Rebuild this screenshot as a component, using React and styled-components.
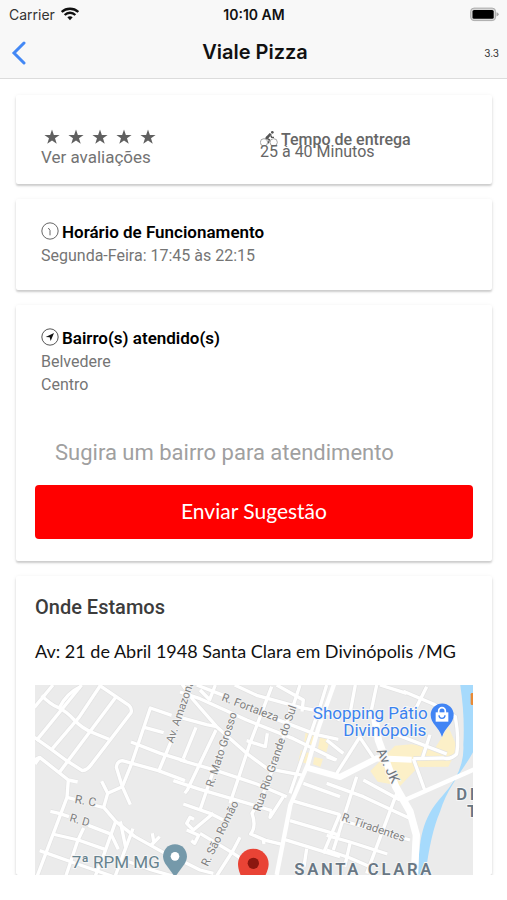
import React from "react";
import styled, { createGlobalStyle } from "styled-components";

const Global = createGlobalStyle`
  *, *::before, *::after { box-sizing: border-box; }
  body { margin: 0; background: #fff; font-family: Roboto, "Liberation Sans", sans-serif; }
  h1, h2, p, ul { margin: 0; padding: 0; }
`;

const Header = styled.header`
  background: #f8f8f8;
  border-bottom: 1px solid #dcdcdc;
  font-family: Inter, "Liberation Sans", sans-serif;
  color: #111;
`;

const Bar = styled.div`
  display: grid;
  grid-template-columns: 1fr auto 1fr;
  align-items: center;
  height: ${(p) => p.$height}px;
  padding: 0 8px 0 ${(p) => p.$left}px;
`;

const Carrier = styled.span`
  display: flex;
  align-items: center;
  gap: 6px;
  font-size: 14px;
  color: #333;
`;

const Time = styled.span`
  font-size: 14px;
  font-weight: 600;
`;

const End = styled.span`
  justify-self: end;
  display: flex;
  font-size: 10px;
  color: #333;
`;

const BackButton = styled.button`
  justify-self: start;
  display: flex;
  padding: 0;
  border: 0;
  background: none;
  cursor: pointer;
`;

const Title = styled.h1`
  font-size: 20px;
  line-height: 24px;
  font-weight: 600;
  padding-bottom: 2px;
`;

const Content = styled.main`
  display: flex;
  flex-direction: column;
  gap: 15px;
  padding: 16px 15px 0 16px;
  overflow: hidden;
`;

const Card = styled.section`
  padding: ${(p) => p.$pad};
  background: #fff;
  border-radius: 2px;
  box-shadow: 0 2px 2px rgba(0, 0, 0, 0.16), 0 1px 4px rgba(0, 0, 0, 0.08);
`;

const Columns = styled.div`
  display: grid;
  grid-template-columns: 1fr 1fr;
`;

const Cell = styled.div`
  padding-left: 6px;
  color: #666;
`;

const Delivery = styled(Cell)`
  padding-top: 7px;
  font-size: 16px;
  line-height: 12px;
`;

const DeliveryTitle = styled.h2`
  display: flex;
  align-items: center;
  gap: 3px;
  height: 12px;
  font-size: 16px;
  line-height: 12px;
  font-weight: 500;
`;

const Stars = styled.div`
  display: flex;
  align-items: center;
  gap: 8px;
  height: 20px;
  padding-left: 3px;
`;

const ReviewsLink = styled.a`
  display: block;
  font-size: 17px;
  line-height: 20px;
  color: #737373;
  text-decoration: none;
`;

const InfoTitle = styled.h2`
  display: flex;
  align-items: center;
  gap: 3px;
  font-size: 17px;
  line-height: 23px;
  font-weight: 600;
  color: #000;

  svg { margin-bottom: 4px; }
`;

const InfoList = styled.ul`
  list-style: none;
  font-size: 16px;
  line-height: 23px;
  color: #757575;
`;

const Form = styled.form`
  display: flex;
  flex-direction: column;
  gap: 5px;
  margin-top: 28px;
`;

const SuggestionInput = styled.input`
  width: 100%;
  height: 56px;
  padding: 0 20px;
  border: 0;
  outline: 0;
  background: transparent;
  font: 22px Roboto, "Liberation Sans", sans-serif;
  color: #333;

  &::placeholder { color: #a0a0a0; opacity: 1; }
`;

const SubmitButton = styled.button`
  height: 54px;
  padding: 0 0 3px;
  border: 0;
  border-radius: 4px;
  background: #ff0000;
  color: #fff;
  font: 400 21px Lato, "Liberation Sans", sans-serif;
  cursor: pointer;
`;

const PlaceTitle = styled.h2`
  font-size: 20px;
  line-height: 24px;
  font-weight: 500;
  color: #3c3c3c;
`;

const Address = styled.p`
  margin: 20px 0 22px;
  font: 400 18px/24px Lato, "Liberation Sans", sans-serif;
  color: #111;
`;

const MapDrawing = styled.svg`
  display: block;
  width: 100%;
  height: 190px;
  font-family: Roboto, "Liberation Sans", sans-serif;
`;

const WifiIcon = () => (
  <svg width="18" height="14" viewBox="0 0 54 42" fill="none" stroke="#111" strokeWidth="7">
    <path d="M2 15C16 2 38 2 52 15" />
    <path d="M11 24C20 15 34 15 43 24" />
    <path d="M19 31C24 27 30 27 35 31L27 40Z" fill="#111" stroke="none" />
  </svg>
);

const BatteryIcon = () => (
  <svg width="29" height="15" viewBox="0 0 93 45">
    <rect x="2" y="2" width="80" height="40" rx="11" fill="#d6d6d6" stroke="#a8a8a8" strokeWidth="3" />
    <rect x="8" y="8" width="68" height="28" rx="5" fill="#000" />
    <path d="M85 15q7 2 7 7t-7 7z" fill="#a8a8a8" />
  </svg>
);

const BackIcon = () => (
  <svg width="15" height="24" viewBox="0 0 15 24" fill="none" stroke="#4388f5" strokeWidth="3">
    <path d="M13 2L3 12L13 22" strokeLinecap="round" strokeLinejoin="miter" />
  </svg>
);

const StarIcon = () => (
  <svg width="16" height="16" viewBox="0 0 24 24" fill="#606060">
    <path d="M12 .8l2.800 8.100h8.600l-6.900 5.100 2.600 8.300-7.100-5.100-7.100 5.100 2.600-8.300L.6 8.900h8.600z" />
  </svg>
);

const BikeIcon = () => (
  <svg width="18" height="18" viewBox="0 0 54 54" fill="none" stroke="#777" strokeWidth="2">
    <circle cx="12" cy="34" r="11" />
    <circle cx="41" cy="34" r="11" />
    <path d="M24 16L18 21L28 26L25 37M32 13L35 19H42" stroke="#555" strokeWidth="4" />
    <path d="M17 19L29 6L35 10L24 23Z" fill="#555" stroke="none" />
    <circle cx="37" cy="4" r="4" fill="#555" stroke="none" />
  </svg>
);

const ClockIcon = () => (
  <svg width="18" height="18" viewBox="0 0 54 54" fill="none" stroke="#666" strokeWidth="3">
    <circle cx="27" cy="27" r="24.500" />
    <path d="M22 18L27 25V40" strokeWidth="3" />
  </svg>
);

const NavigateIcon = () => (
  <svg width="18" height="18" viewBox="0 0 54 54">
    <circle cx="27" cy="27" r="24.500" fill="none" stroke="#555" strokeWidth="3" />
    <path d="M39 15L29 39L26 28L14 27Z" fill="#111" />
  </svg>
);

const roadsWest = [
  "M28 82L84 15",
  "M34 182L170 15",
  "M82 206L162 112L225 18",
  "M104 276L275 48",
  "M50 46Q72 70 98 82T148 120T204 158L252 178",
  "M28 172L76 206L122 240L172 272Q188 270 200 252L318 98Q322 86 312 76L222 15",
  "M104 82Q124 40 166 20",
  "M28 240L44 232L130 300L158 306",
  "M44 232L30 252",
  "M130 300L126 352L36 590",
  "M126 352L150 358M205 375L234 382",
  "M76 394L102 400L132 410M190 436L262 464",
  "M82 462L160 480L240 508",
  "M44 512L140 546L260 588",
  "M176 444L158 482L122 590",
  "M230 304L248 340L236 382L272 424L330 470L420 520",
  "M248 340L292 320L316 374",
  "M292 320L274 262Q276 244 292 242L400 272L480 302",
  "M292 320L320 250L376 84L440 106",
  "M358 142L416 158",
  "M318 186L406 220L484 244",
  "M400 276L440 180",
  "M272 424L238 520L210 590",
  "M258 462L280 508",
  "M286 424L302 502",
  "M324 446L296 520L270 590",
  "M376 498L404 470M386 484L382 460",
  "M296 540L380 570L450 590",
];

const roadsCentre = [
  "M-10 -10L40 60L110 140L205 224L262 266L370 286",
  "M0 36L60 56L200 120L340 176L470 240",
  "M50 15L130 46M230 96L300 122L410 164L475 178",
  "M164 15L230 46L360 82L400 90",
  "M0 112L80 134L110 140",
  "M0 240L110 272L230 312L320 350",
  "M-20 302L60 328L250 384L275 392",
  "M275 392L270 412L310 350",
  "M60 30L90 60M106 15L88 62",
  "M48 142L10 236",
  "M108 150L22 330L14 340",
  "M160 112L108 250L60 390",
  "M275 20L210 190L150 370",
  "M334 74L300 210L250 340L216 400Q230 440 212 462L260 482L310 494",
  "M10 372L90 400L130 420",
  "M42 418L30 412L20 430L40 450L100 400",
  "M20 450L56 466L44 490L34 482",
  "M60 460L160 520L190 540",
  "M180 472L160 510L110 588",
  "M0 540L60 570L100 580",
  "M290 15L370 60L366 95",
  "M262 160L256 200L200 182",
  "M360 15L340 76",
  "M250 480L252 492",
  "M336 362L480 404",
  "M330 422L480 466",
  "M312 478L480 530",
  "M370 310L480 350",
  "M380 506L372 560",
  "M440 15L420 80L330 340",
  "M480 402L430 520",
];

const roadsEast = [
  "M76 15L60 100",
  "M90 170L20 280",
  "M30 120L-20 92",
  "M220 34L310 72L376 110Q388 180 380 222Q362 240 340 234L250 236",
  "M290 20L260 80L230 110",
  "M200 164L350 222",
  "M300 164L278 232",
  "M140 15L120 110",
  "M88 170L130 232",
  "M-10 310L100 350L250 420",
  "M-10 180L40 220",
  "M80 290L10 510",
  "M100 300L210 360",
  "M200 340L110 580",
  "M30 420L240 480",
  "M250 236L284 330",
  "M-10 466L60 486L172 522",
  "M-10 510L60 534L120 560",
  "M60 490L44 560",
  "M150 15L230 40",
  "M-10 230L16 240",
];

const Roads = ({ paths, shift }) => (
  <g transform={`translate(${shift} -15)`}>
    {paths.map((d) => <path key={d} d={d} />)}
  </g>
);

const CityMap = () => (
  <MapDrawing viewBox="0 0 1314 570" preserveAspectRatio="xMinYMin slice" role="img" aria-label="Mapa da região de Santa Clara">
    <rect width="1400" height="600" fill="#ebebeb" />
    <g fill="#fcf0c8">
      <path d="M812 140l26 8-8 40-24-6zM856 152l30 8-12 42-26-8zM798 196l24 8-6 32-26-8zM838 216l26 6-8 24-22-8z" />
      <path d="M1006 258L1080 182L1130 178L1200 190L1240 125L1268 190L1240 245L1150 246L1096 302L1028 290Z" />
    </g>
    <path d="M1275 -5H1320V190C1290 250 1240 300 1215 380Q1185 450 1170 580H1150C1150 470 1160 400 1220 335Q1290 260 1285 180Q1290 90 1275 -5Z" fill="#a6dafc" />
    <g fill="none" stroke="#e2e2e2" strokeWidth="14" strokeLinejoin="round">
      <Roads paths={roadsWest} shift={-30} />
      <Roads paths={roadsCentre} shift={435} />
      <Roads paths={roadsEast} shift={885} />
    </g>
    <g fill="none" stroke="#fff" strokeWidth="10" strokeLinejoin="round">
      <Roads paths={roadsWest} shift={-30} />
      <Roads paths={roadsCentre} shift={435} />
      <Roads paths={roadsEast} shift={885} />
    </g>
    <g fill="none" stroke="#fff" strokeWidth="13" strokeLinejoin="round">
      <path d="M900 -10L850 130L818 240L766 360L725 570" />
      <path d="M815 248L915 276L1025 220L1130 224" strokeWidth="18" />
      <path d="M1110 345L1320 252" />
      <path d="M1018 90L1030 165L1082 305L1125 380L1144 450L1138 570" strokeWidth="22" />
    </g>
    <g fill="#808080" stroke="#f4f4f4" strokeWidth="5" paintOrder="stroke" fontSize="34">
      <text transform="translate(118 354) rotate(10)" fontSize="36">R. C</text>
      <text transform="translate(102 408) rotate(16)">R. D</text>
      <text transform="translate(414 176) rotate(-71)">Av. Amazonas</text>
      <text transform="translate(558 46) rotate(21)">R. Fortaleza</text>
      <text transform="translate(534 308) rotate(-72)">R. Mato Grosso</text>
      <text transform="translate(676 382) rotate(-71)">Rua Rio Grande do Sul</text>
      <text transform="translate(518 546) rotate(-64)">R. São Romão</text>
      <text transform="translate(918 406) rotate(19)">R. Tiradentes</text>
      <text transform="translate(1024 198) rotate(65)" fontSize="40" fill="#6c747b">Av. JK</text>
    </g>
    <g stroke="#f6f6f6" strokeWidth="6" paintOrder="stroke">
      <text x="110" y="548" fontSize="51" fill="#66828e">7ª RPM MG</text>
      <g fill="#3b82ef" fontSize="51" textAnchor="end">
        <text x="1178" y="102">Shopping Pátio</text>
        <text x="1174" y="152">Divinópolis</text>
      </g>
      <g fill="#687784" fontSize="50" fontWeight="600" letterSpacing="8">
        <text x="778" y="571">SANTA CLARA</text>
        <text x="1264" y="346">DI</text>
        <text x="1296" y="396">T</text>
      </g>
    </g>
    <path d="M420 576L391 536C374 510 391 478 420 478S466 510 449 536Z" fill="#7599aa" />
    <circle cx="420" cy="514" r="13" fill="#fff" />
    <path d="M620 578C611 558 609 545 609 537A46 46 0 1 1 701 537C701 545 698 558 688 578Z" fill="#e94335" />
    <circle cx="655" cy="535" r="17" fill="#8c1710" />
    <path d="M1221 156C1212 126 1187 116 1187 90A34 34 0 1 1 1256 90C1256 116 1230 126 1221 156Z" fill="#4285f4" />
    <path d="M1202 82H1240V110H1202Z" fill="#fff" />
    <path d="M1211 84V78A10 10 0 0 1 1231 78V84" fill="none" stroke="#fff" strokeWidth="5" />
    <path d="M1212 91A9 9 0 0 0 1230 91" fill="none" stroke="#4285f4" strokeWidth="4" />
    <rect x="1307" y="24" width="20" height="36" rx="4" fill="#e98a35" />
  </MapDrawing>
);

export default function App() {
  return (
    <>
      <Global />
      <Header>
        <Bar $height={28} $left={9}>
          <Carrier>Carrier <WifiIcon /></Carrier>
          <Time>10:10 AM</Time>
          <End><BatteryIcon /></End>
        </Bar>
        <Bar $height={50} $left={11}>
          <BackButton type="button" aria-label="Voltar"><BackIcon /></BackButton>
          <Title>Viale Pizza</Title>
          <End>3.3</End>
        </Bar>
      </Header>
      <Content>
        <Card $pad="32px 19px 17px">
          <Columns>
            <Cell>
              <Stars>{[1, 2, 3, 4, 5].map((n) => <StarIcon key={n} />)}</Stars>
              <ReviewsLink href="#avaliacoes">Ver avaliações</ReviewsLink>
            </Cell>
            <Delivery>
              <DeliveryTitle><BikeIcon />Tempo de entrega</DeliveryTitle>
              <p>25 à 40 Minutos</p>
            </Delivery>
          </Columns>
        </Card>
        <Card $pad="22px 19px 23px">
          <Cell>
            <InfoTitle><ClockIcon />Horário de Funcionamento</InfoTitle>
            <InfoList><li>Segunda-Feira: 17:45 às 22:15</li></InfoList>
          </Cell>
        </Card>
        <Card $pad="22px 19px 22px">
          <Cell>
            <InfoTitle><NavigateIcon />Bairro(s) atendido(s)</InfoTitle>
            <InfoList><li>Belvedere</li><li>Centro</li></InfoList>
          </Cell>
          <Form onSubmit={(e) => e.preventDefault()}>
            <SuggestionInput type="text" aria-label="Sugira um bairro para atendimento" placeholder="Sugira um bairro para atendimento" />
            <SubmitButton type="submit">Enviar Sugestão</SubmitButton>
          </Form>
        </Card>
        <Card $pad="19px 19px 0">
          <PlaceTitle>Onde Estamos</PlaceTitle>
          <Address>Av: 21 de Abril 1948 Santa Clara em Divinópolis /MG</Address>
          <CityMap />
        </Card>
      </Content>
    </>
  );
}
